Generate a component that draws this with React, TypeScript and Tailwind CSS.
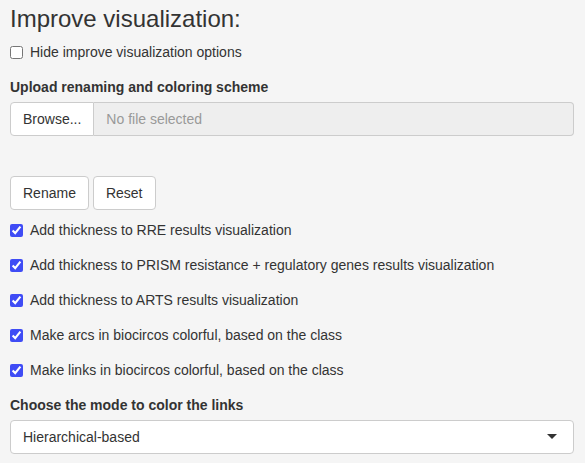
import React from "react";

const font = { fontFamily: '"Liberation Sans", Arial, Helvetica, sans-serif' };

function Check({ label, checked }: { label: string; checked?: boolean }) {
  return (
    <label className="relative flex h-5 items-center pl-5 text-[14px] leading-5 text-[#333]">
      <input
        type="checkbox"
        defaultChecked={checked}
        className="absolute left-0 top-[4px] m-0 h-[13px] w-[13px] accent-[#3f4cf5]"
      />
      <span>{label}</span>
    </label>
  );
}

export default function App() {
  return (
    <div
      style={font}
      className="min-h-[463px] w-[585px] bg-[#f5f5f5] pl-[10px] pr-[11px] text-[14px] leading-5 text-[#333]"
    >
      <div className="h-[6px]" />
      <h3 className="text-[24px] font-normal leading-[26px] text-[#333]">Improve visualization:</h3>
      <div className="mt-[10px]">
        <Check label="Hide improve visualization options" />
      </div>
      <div className="mt-[15px] font-bold leading-5">Upload renaming and coloring scheme</div>
      <div className="mt-[5px] flex h-[34px]">
        <button className="rounded-l-[4px] border border-[#ccc] bg-white px-3 text-[14px] text-[#333]">
          Browse...
        </button>
        <div className="flex flex-1 items-center rounded-r-[4px] border border-l-0 border-[#ccc] bg-[#eee] px-3 text-[#999]">
          No file selected
        </div>
      </div>
      <div className="mt-[40px] flex gap-[4px]">
        <button className="h-[34px] rounded-[4px] border border-[#ccc] bg-white px-3 text-[14px] text-[#333]">
          Rename
        </button>
        <button className="h-[34px] rounded-[4px] border border-[#ccc] bg-white px-3 text-[14px] text-[#333]">
          Reset
        </button>
      </div>
      <div className="mt-[10px] flex flex-col gap-[15px]">
        <Check checked label="Add thickness to RRE results visualization" />
        <Check checked label="Add thickness to PRISM resistance + regulatory genes results visualization" />
        <Check checked label="Add thickness to ARTS results visualization" />
        <Check checked label="Make arcs in biocircos colorful, based on the class" />
        <Check checked label="Make links in biocircos colorful, based on the class" />
      </div>
      <div className="mt-[15px] font-bold leading-5">Choose the mode to color the links</div>
      <div className="relative mt-[5px] flex h-[34px] items-center rounded-[4px] border border-[#ccc] bg-white px-3 text-[#333]">
        Hierarchical-based
        <span className="absolute right-[16px] top-1/2 mt-[-3px] h-0 w-0 border-x-[5px] border-t-[5px] border-x-transparent border-t-[#333]" />
      </div>
    </div>
  );
}
